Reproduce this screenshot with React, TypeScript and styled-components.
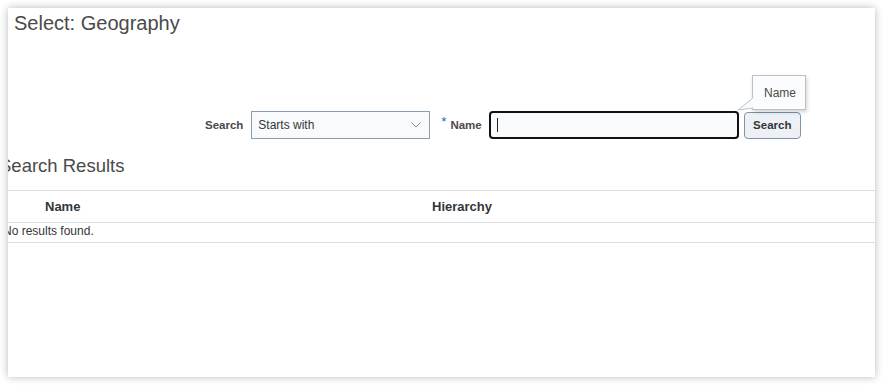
import styled, { createGlobalStyle } from "styled-components";

const GlobalStyle = createGlobalStyle`
    html, body {
        margin: 0;
        background: #ffffff;
    }
    body {
        font-family: Arial, "Liberation Sans", Helvetica, sans-serif;
        color: #32363a;
    }
`;

const Page = styled.div`
    padding: 8px;
`;

const Panel = styled.section`
    position: relative;
    width: 867px;
    height: 369px;
    background: #ffffff;
    box-shadow: 0 0 8px rgba(0, 0, 0, 0.28);
    overflow: hidden;
`;

const Title = styled.h1`
    margin: 0;
    padding: 3px 0 0 6px;
    font-size: 20px;
    line-height: 24px;
    font-weight: normal;
    color: #4a4a4a;
`;

const SearchBar = styled.form`
    display: flex;
    align-items: center;
    margin: 76px 0 0 197px;
    height: 28px;
`;

const Label = styled.label<{ $gap: number }>`
    font-size: 11.5px;
    font-weight: bold;
    color: #4a4a4a;
    margin-right: ${p => p.$gap}px;
    white-space: nowrap;
`;

const Required = styled.span`
    color: #0a6ed1;
    font-size: 13px;
    margin: 0 4px 0 11px;
    position: relative;
    top: -4px;
`;

const Select = styled.div`
    box-sizing: border-box;
    display: flex;
    align-items: center;
    justify-content: space-between;
    width: 179px;
    height: 28px;
    padding: 0 8px 0 6px;
    border: 1px solid #8a9cae;
    background: #f8fafc;
    font-size: 12px;
    color: #32363a;
`;

const TextBox = styled.div`
    box-sizing: border-box;
    display: flex;
    align-items: center;
    width: 250px;
    height: 28px;
    padding-left: 6px;
    border: 2px solid #111111;
    border-radius: 4px;
    background: #fafbfc;
`;

const Caret = styled.span`
    width: 1px;
    height: 14px;
    background: #222222;
`;

const Button = styled.button`
    box-sizing: border-box;
    width: 57px;
    height: 27px;
    margin-left: 5px;
    padding: 0;
    border: 1px solid #7d93a8;
    border-radius: 4px;
    background: #edf1f5;
    font-family: inherit;
    font-size: 11.5px;
    font-weight: bold;
    color: #32363a;
`;

const Tooltip = styled.div`
    position: absolute;
    left: 744px;
    top: 67px;
    box-sizing: border-box;
    width: 54px;
    height: 35px;
    padding: 10px 0 0 11px;
    border: 1px solid #b9c2cb;
    background: #fbfcfd;
    box-shadow: 1px 2px 4px rgba(0, 0, 0, 0.18);
    font-size: 12px;
    color: #4a4a4a;
`;

const TooltipTail = styled.svg`
    position: absolute;
    left: -16px;
    bottom: -2px;
    overflow: visible;
`;

const Results = styled.div`
    margin: 16px 0 0 -9px;
    width: calc(100% + 9px);
`;

const ResultsTitle = styled.h2`
    margin: 0;
    font-size: 18.5px;
    line-height: 22px;
    font-weight: normal;
    color: #4a4a4a;
`;

const Table = styled.div`
    display: grid;
    grid-template-columns: 41px 387px 1fr;
    margin-top: 13px;
    border-top: 1px solid #d5dee6;
`;

const HeadCell = styled.div`
    height: 31px;
    display: flex;
    align-items: center;
    padding-left: 5px;
    border-bottom: 1px solid #d5dee6;
    font-size: 13px;
    font-weight: bold;
    color: #32363a;
`;

const EmptyRow = styled.div`
    grid-column: 1 / -1;
    height: 19px;
    padding-left: 4px;
    border-bottom: 1px solid #d5dee6;
    font-size: 12px;
    line-height: 16px;
    color: #32363a;
`;

export default function App() {
    return (
        <Page>
            <GlobalStyle />
            <Panel>
                <Title>Select: Geography</Title>
                <SearchBar onSubmit={e => e.preventDefault()}>
                    <Label $gap={8}>Search</Label>
                    <Select>
                        <span>Starts with</span>
                        <svg width="10" height="6" viewBox="0 0 10 6">
                            <polyline points="0.5,0.5 5,5 9.5,0.5" fill="none" stroke="#7a8694" strokeWidth="1" />
                        </svg>
                    </Select>
                    <Required>*</Required>
                    <Label $gap={7}>Name</Label>
                    <TextBox>
                        <Caret />
                    </TextBox>
                    <Button type="submit">Search</Button>
                </SearchBar>
                <Tooltip>
                    Name
                    <TooltipTail width="16" height="16" viewBox="0 0 16 16">
                        <polygon points="16,3 1,15 16,13" fill="#fbfcfd" stroke="#b9c2cb" strokeWidth="1" />
                        <line x1="16" y1="3.6" x2="16" y2="12.6" stroke="#fbfcfd" strokeWidth="2" />
                    </TooltipTail>
                </Tooltip>
                <Results>
                    <ResultsTitle>Search Results</ResultsTitle>
                    <Table>
                        <HeadCell />
                        <HeadCell>Name</HeadCell>
                        <HeadCell>Hierarchy</HeadCell>
                        <EmptyRow>No results found.</EmptyRow>
                    </Table>
                </Results>
            </Panel>
        </Page>
    );
}
